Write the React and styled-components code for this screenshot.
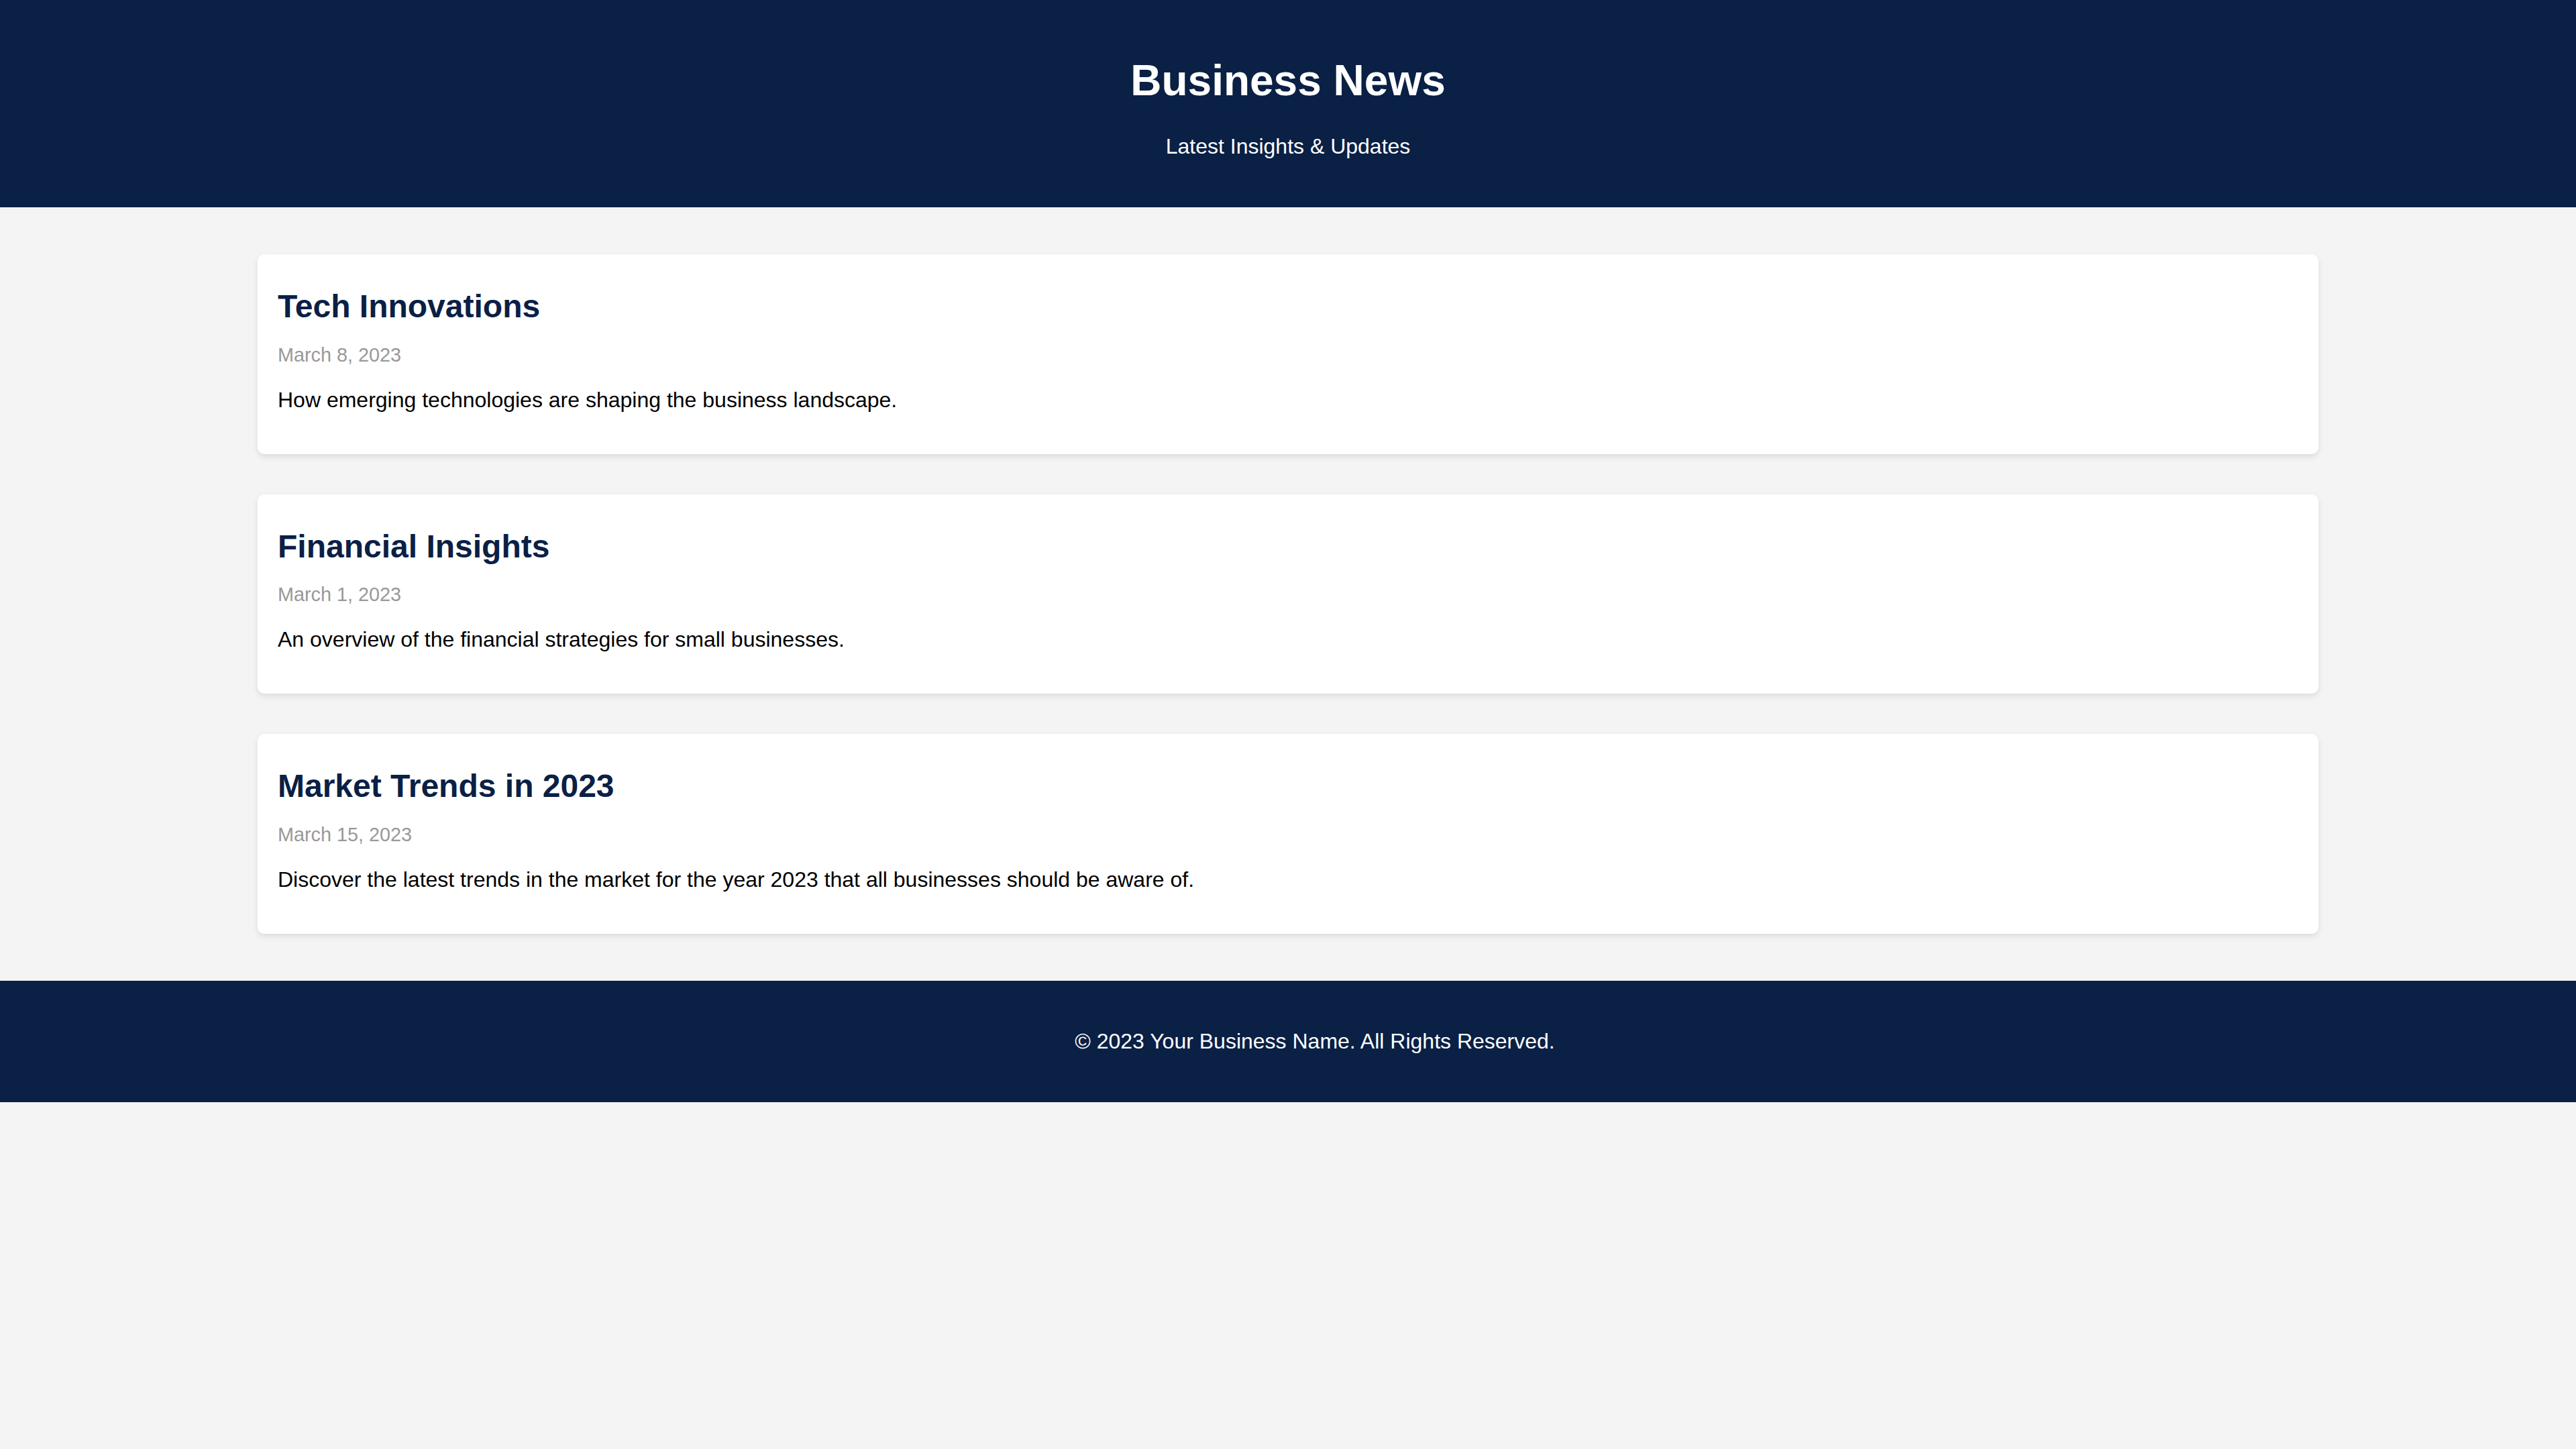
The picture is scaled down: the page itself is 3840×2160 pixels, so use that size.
import React from "react";
import styled, { createGlobalStyle } from "styled-components";

const GlobalStyle = createGlobalStyle`
  html {
    overflow-x: hidden;
  }
  body {
    margin: 0;
    background-color: #f4f4f4;
    font-family: "Liberation Sans", Arial, Helvetica, sans-serif;
    color: #000;
  }
`;

const Header = styled.header`
  background-color: #0a2045;
  color: white;
  text-align: center;
  padding: 40px;
`;

const SiteTitle = styled.h1`
  font-size: 64px;
  font-weight: bold;
  margin: 42.88px 0;
`;

const Tagline = styled.p`
  font-size: 32px;
  margin: 32px 0;
`;

const Main = styled.main`
  padding: 70px 0;
`;

const Feed = styled.section`
  width: 80%;
  margin: 0 auto;
  display: flex;
  flex-direction: column;
  gap: 60px;
`;

const Article = styled.article`
  background-color: white;
  padding: 30px;
  border-radius: 10px;
  box-shadow: 0 4px 10px rgba(0, 0, 0, 0.1);
`;

const ArticleTitle = styled.h2`
  color: #0a2045;
  font-size: 48px;
  margin: 20px 0;
`;

const ArticleDate = styled.p`
  color: #999;
  font-size: 28.8px;
  margin: 28.8px 0;
`;

const Summary = styled.p`
  font-size: 32px;
  margin: 32px 0;
`;

/* full width plus its padding, so the text sits a little right of centre */
const Footer = styled.footer`
  box-sizing: content-box;
  width: 100%;
  background-color: #0a2045;
  color: white;
  text-align: center;
  padding: 40px;
`;

const Copyright = styled.p`
  font-size: 32px;
  margin: 32px 0;
`;

const articles = [
  {
    title: "Tech Innovations",
    date: "March 8, 2023",
    summary: "How emerging technologies are shaping the business landscape.",
  },
  {
    title: "Financial Insights",
    date: "March 1, 2023",
    summary: "An overview of the financial strategies for small businesses.",
  },
  {
    title: "Market Trends in 2023",
    date: "March 15, 2023",
    summary:
      "Discover the latest trends in the market for the year 2023 that all businesses should be aware of.",
  },
];

const App = () => {
  return (
    <>
      <GlobalStyle />
      <Header>
        <SiteTitle>Business News</SiteTitle>
        <Tagline>Latest Insights &amp; Updates</Tagline>
      </Header>
      <Main>
        <Feed>
          {articles.map((item) => (
            <Article key={item.title}>
              <ArticleTitle>{item.title}</ArticleTitle>
              <ArticleDate>{item.date}</ArticleDate>
              <Summary>{item.summary}</Summary>
            </Article>
          ))}
        </Feed>
      </Main>
      <Footer>
        <Copyright>© 2023 Your Business Name. All Rights Reserved.</Copyright>
      </Footer>
    </>
  );
};

export default App;
